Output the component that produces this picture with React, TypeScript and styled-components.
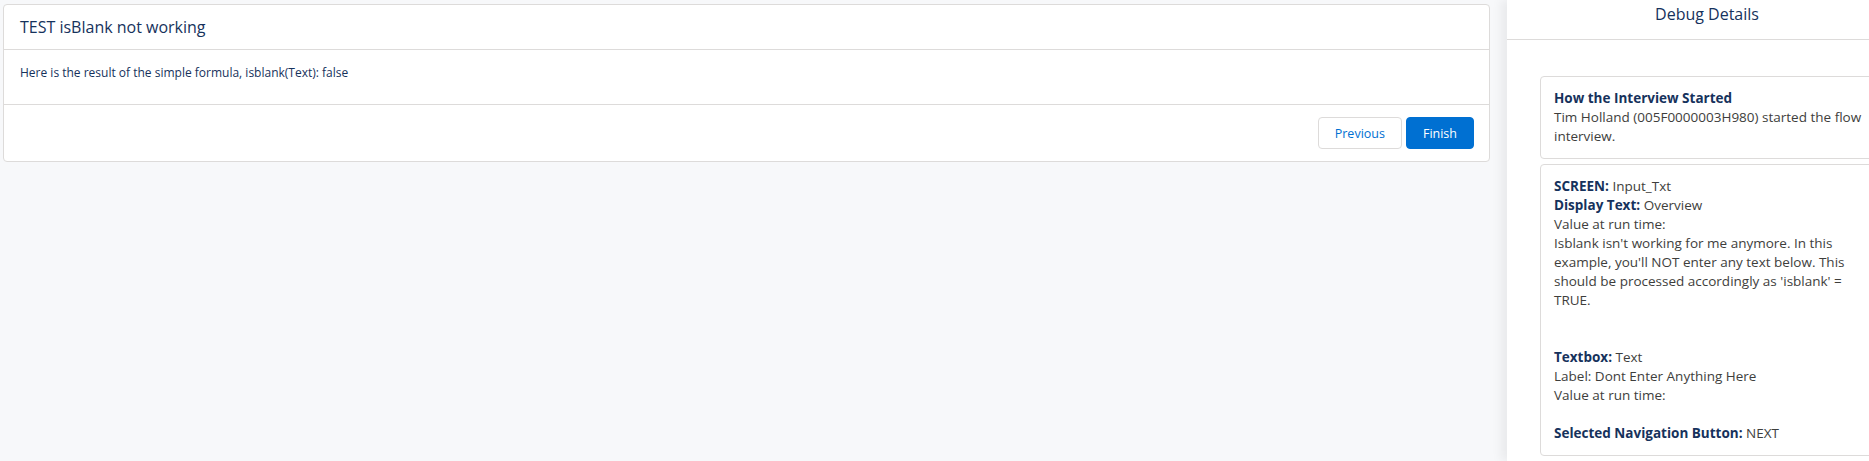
import React from 'react';
import styled, { createGlobalStyle } from 'styled-components';

const GlobalStyle = createGlobalStyle`
  html, body {
    margin: 0;
    padding: 0;
    overflow: hidden;
    background: #f7f8fa;
  }
  body {
    font-family: "Open Sans", "Liberation Sans", sans-serif;
    color: #16325c;
  }
`;

const Page = styled.div`
  display: flex;
  width: 1907px;
  height: 461px;
  overflow: hidden;
`;

const Main = styled.div`
  flex: 0 0 1507px;
  padding: 4px 17px 0 3px;
  box-sizing: border-box;
  background: #f7f8fa;
`;

const Card = styled.div`
  background: #fff;
  border: 1px solid #dddbda;
  border-radius: 4px;
`;

const CardHeader = styled.div`
  height: 44px;
  padding: 0 16px;
  display: flex;
  align-items: center;
  border-bottom: 1px solid #dddbda;
  font-size: 16px;
  color: #16325c;
`;

const CardBody = styled.div`
  height: 55px;
  padding: 14px 16px 0;
  box-sizing: border-box;
  font-size: 12px;
  line-height: 18px;
  color: #16325c;
  border-bottom: 1px solid #dddbda;
`;

const CardFooter = styled.div`
  height: 56px;
  padding: 0 15px 0 16px;
  display: flex;
  align-items: center;
  justify-content: flex-end;
  gap: 4px;
`;

const Button = styled.button<{ $brand?: boolean }>`
  height: 32px;
  padding: 0 16px;
  border-radius: 4px;
  font-family: inherit;
  font-size: 12.5px;
  cursor: pointer;
  border: 1px solid ${p => (p.$brand ? '#0070d2' : '#dddbda')};
  background: ${p => (p.$brand ? '#0070d2' : '#fff')};
  color: ${p => (p.$brand ? '#fff' : '#0070d2')};
`;

const Panel = styled.aside`
  flex: 0 0 400px;
  background: #fff;
  box-shadow: -6px 0 10px rgba(0, 0, 0, 0.06);
  display: flex;
  flex-direction: column;
`;

const PanelHeader = styled.div`
  height: 40px;
  border-bottom: 1px solid #dddbda;
  display: flex;
  align-items: flex-start;
  justify-content: center;
  padding-top: 3px;
  box-sizing: border-box;
  font-size: 16px;
  color: #16325c;
`;

const PanelBody = styled.div`
  padding: 36px 0 0 33px;
  display: flex;
  flex-direction: column;
  gap: 5px;
`;

const DebugCard = styled.div`
  width: 308px;
  padding: 12px 13px 12px;
  border: 1px solid #dddbda;
  border-radius: 4px;
  font-size: 13.5px;
  line-height: 19px;
  color: #3e3e3c;
`;

const Label = styled.b`
  color: #16325c;
  font-weight: 700;
`;

const Line = styled.div<{ $gap?: number }>`
  margin-top: ${p => (p.$gap ? p.$gap * 19 : 0)}px;
`;

export default function App() {
  return (
    <>
      <GlobalStyle />
      <Page>
        <Main>
          <Card>
            <CardHeader>TEST isBlank not working</CardHeader>
            <CardBody>Here is the result of the simple formula, isblank(Text): false</CardBody>
            <CardFooter>
              <Button>Previous</Button>
              <Button $brand>Finish</Button>
            </CardFooter>
          </Card>
        </Main>
        <Panel>
          <PanelHeader>Debug Details</PanelHeader>
          <PanelBody>
            <DebugCard>
              <Line><Label>How the Interview Started</Label></Line>
              <Line>Tim Holland (005F0000003H980) started the flow interview.</Line>
            </DebugCard>
            <DebugCard>
              <Line><Label>SCREEN:</Label> Input_Txt</Line>
              <Line><Label>Display Text:</Label> Overview</Line>
              <Line>Value at run time:</Line>
              <Line>
                Isblank isn't working for me anymore. In this example, you'll NOT enter any text
                below. This should be processed accordingly as 'isblank' = TRUE.
              </Line>
              <Line $gap={2}><Label>Textbox:</Label> Text</Line>
              <Line>Label: Dont Enter Anything Here</Line>
              <Line>Value at run time:</Line>
              <Line $gap={1}><Label>Selected Navigation Button:</Label> NEXT</Line>
            </DebugCard>
          </PanelBody>
        </Panel>
      </Page>
    </>
  );
}
